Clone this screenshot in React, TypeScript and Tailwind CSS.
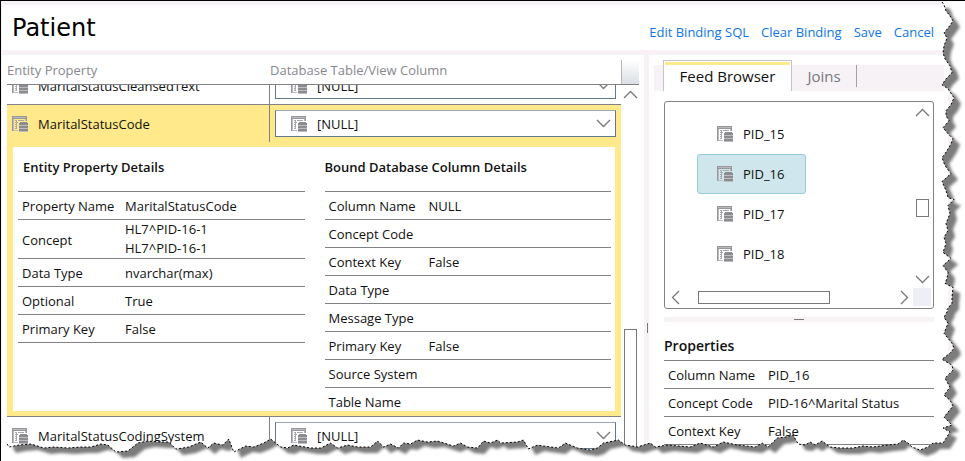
import React from "react";

type Row = { label: string; value?: string[] };

const entityRows: Row[] = [
  { label: "Property Name", value: ["MaritalStatusCode"] },
  { label: "Concept", value: ["HL7^PID-16-1", "HL7^PID-16-1"] },
  { label: "Data Type", value: ["nvarchar(max)"] },
  { label: "Optional", value: ["True"] },
  { label: "Primary Key", value: ["False"] },
];

const columnRows: Row[] = [
  { label: "Column Name", value: ["NULL"] },
  { label: "Concept Code" },
  { label: "Context Key", value: ["False"] },
  { label: "Data Type" },
  { label: "Message Type" },
  { label: "Primary Key", value: ["False"] },
  { label: "Source System" },
  { label: "Table Name" },
];

const feedRows: Row[] = [
  { label: "Column Name", value: ["PID_16"] },
  { label: "Concept Code", value: ["PID-16^Marital Status"] },
  { label: "Context Key", value: ["False"] },
];

function TableIcon() {
  return (
    <svg width="16" height="16" viewBox="0 0 16 16" className="shrink-0" shapeRendering="crispEdges" aria-hidden="true">
      <path fill="#96969b" d="M0 0h15v1H0zM0 1h1v14H0zM14 1h1v4h-1zM1 2h13v1H1z" />
      <path fill="#b9b9be" d="M1 1h13v1H1zM1 3h1v12H1zM13 3h1v2h-1zM2 14h4v1H2z" />
      <path fill="#a8a8ad" d="M3 4h2v1H3zM6 4h6v1H6zM3 6h1v1H3zM5 6h1v1H5zM3 8h2v1H3zM3 10h2v1H3zM3 12h2v1H3zM4 4h1v9H4z" />
      <path fill="#8b8b90" d="M8 6h7v1H8zM7 7h9v2H7zM7 10h9v2H7zM7 13h9v2H7z" />
      <path fill="#bcbcc1" d="M7 9h9v1H7zM7 12h9v1H7zM7 15h9v1H7z" />
    </svg>
  );
}

const chevrons = {
  up: "M0 7 6.500 0.500 13 7",
  down: "M0 0 6.500 6.500 13 0",
  left: "M7 0 0.500 6.500 7 13",
  right: "M0 0 6.500 6.500 0 13",
};

function Chevron({ dir }: { dir: keyof typeof chevrons }) {
  const flat = dir === "up" || dir === "down";
  return (
    <svg width={flat ? 13 : 7} height={flat ? 7 : 13} className="block shrink-0 overflow-visible" aria-hidden="true">
      <path d={chevrons[dir]} fill="none" stroke="#77777c" strokeWidth="1.3" />
    </svg>
  );
}

function Details({ rows, labelWidth, openEnd }: { rows: Row[]; labelWidth: string; openEnd?: boolean }) {
  return (
    <table className="w-full border-collapse text-left">
      <tbody>
        {rows.map((r, i) => (
          <tr
            key={r.label}
            className={openEnd && i === rows.length - 1 ? "h-7 border-t border-[#828286]" : "h-7 border-y border-[#828286]"}
          >
            <th scope="row" className={`${labelWidth} pl-1 pt-[2px] font-normal`}>{r.label}</th>
            <td className={r.value && r.value.length > 1 ? "" : "pt-[2px]"}>
              {r.value?.map((v, n) => (
                <div key={n} className="leading-[19px]">{v}</div>
              ))}
            </td>
          </tr>
        ))}
      </tbody>
    </table>
  );
}

function PropertyRow({ name }: { name: string }) {
  return (
    <div className="flex h-[37px] shrink-0">
      <div className="flex w-[262px] items-center gap-[10px] pl-[5px]">
        <TableIcon />
        <span className="truncate pt-[2px]">{name}</span>
      </div>
      <div className="flex flex-1 items-center border-l border-[#828286] pl-[5px] pr-[5px]">
        <label className="relative flex h-[27px] w-full items-center">
          <span className="pointer-events-none absolute left-4"><TableIcon /></span>
          <select
            aria-label={`${name} column`}
            className="h-full w-full appearance-none border border-[#64788c] border-t-[#9aa6b2] bg-white pl-[41px] pt-[2px] outline-none"
          >
            <option>[NULL]</option>
          </select>
          <span className="pointer-events-none absolute right-[6px]"><Chevron dir="down" /></span>
        </label>
      </div>
    </div>
  );
}

function TreeItem({ name, selected }: { name: string; selected?: boolean }) {
  return (
    <button
      className={
        selected
          ? "flex h-10 w-[109px] items-center gap-[10px] rounded-[3px] border border-[#93cdd8] bg-[#cfe6ed] pl-[19px]"
          : "flex h-10 w-[109px] items-center gap-[10px] border border-transparent pl-[19px]"
      }
    >
      <TableIcon />
      {name}
    </button>
  );
}

const edge =
  "942,1 944,4 946,10 950,15 953,20 948,27 944,32 947,37 944,45 943,52 945,58 950,65 952,72 946,78 942,84 948,88 954,97 951,104 946,110 946,115 949,120 943,127 948,133 953,138 950,145 945,153 942,157 945,165 951,173 942,181 946,190 948,197 954,199 948,205 950,213 946,223 948,230 944,237 946,243 943,252 951,258 943,265 948,272 947,278 945,283 953,287 952,297 952,303 947,309 948,310 944,317 948,323 944,333 952,343 954,348 950,353 942,359 952,365 953,370 945,378 950,387 944,395 950,400 953,406 944,417 952,425 943,428 950,432 943,443 " +
  "933,443 928,447 920,450 912,447 908,443 903,440 898,444 887,445 873,447 863,446 853,448 840,448 830,447 822,441 815,445 810,442 805,445 798,444 793,435 785,437 777,438 768,447 762,443 755,447 737,445 723,442 713,447 700,443 690,447 667,445 655,447 650,443 637,447 632,446 625,445 618,440 603,443 597,448 590,450 577,448 565,443 558,448 543,446 537,445 528,449 523,440 517,442 500,443 497,440 490,443 483,441 477,448 467,447 460,443 453,446 437,441 427,442 417,440 410,444 403,443 398,448 390,444 383,447 377,441 370,447 357,447 347,445 337,448 330,443 320,448 310,448 293,445 287,448 280,447 270,439 263,443 253,447 245,446 233,452 228,439 222,445 213,443 207,448 200,442 188,447 182,448 175,449 168,442 160,442 147,441 137,443 127,451 115,452 107,445 100,444 90,447 80,447 67,448 53,447 43,448 30,444 18,445 8,447 5,442";

function TornEdge() {
  return (
    <svg
      className="pointer-events-none absolute inset-0 h-full w-full"
      viewBox="0 0 965 461"
      preserveAspectRatio="none"
      aria-hidden="true"
    >
      <defs>
        <clipPath id="outside">
          <polygon points={`965,0 ${edge} 0,443 0,461 965,461`} />
        </clipPath>
        <filter id="soft" x="-5%" y="-5%" width="110%" height="110%">
          <feGaussianBlur stdDeviation="1.8" />
        </filter>
      </defs>
      <g clipPath="url(#outside)">
        <rect x="-2" y="-2" width="969" height="465" fill="#fff" />
        <polygon points={`0,0 ${edge} 5,430`} transform="translate(7 6)" fill="#7c7c7c" filter="url(#soft)" />
      </g>
      <polyline points={edge} fill="none" stroke="#000" strokeWidth="1" strokeDasharray="2 2" />
    </svg>
  );
}

export default function App() {
  return (
    <div className="relative flex h-screen flex-col overflow-hidden border-l border-t border-black bg-[#f7f2f6] pl-px pt-1 font-['Open_Sans','Noto_Sans',sans-serif] text-[13px] leading-[19px] text-[#111]">
      <header className="flex h-[45px] shrink-0 items-center justify-between bg-white pl-[10px] pr-[31px]">
        <h1 className="font-['DejaVu_Sans',sans-serif] text-2xl text-black">Patient</h1>
        <nav className="flex gap-3 pt-[10px] text-[#0f76e6]">
          <a href="#sql">Edit Binding SQL</a>
          <a href="#clear">Clear Binding</a>
          <a href="#save">Save</a>
          <a href="#cancel">Cancel</a>
        </nav>
      </header>

      <div className="mt-[5px] flex min-h-0 flex-1">
        <main className="flex min-w-0 flex-1 flex-col bg-white pl-[5px] pr-[5px]">
          <div className="flex h-[30px] shrink-0 items-end border-b border-[#828286] text-[#88888e]">
            <div className="w-[263px] pb-1">Entity Property</div>
            <div className="flex-1 pb-1">Database Table/View Column</div>
            <div className="h-6 w-[18px] border-l border-[#b4b4ba] bg-linear-to-b from-white to-[#dbe0e4]" />
          </div>
          <div className="flex min-h-0 flex-1">
            <div className="flex min-w-0 flex-1 flex-col overflow-hidden">
              <div className="flex h-5 shrink-0 flex-col justify-end overflow-hidden border-b border-[#828286]">
                <PropertyRow name="MaritalStatusCleansedText" />
              </div>
              <section className="shrink-0 border-b border-[#828286] bg-[#ffe98a]">
                <PropertyRow name="MaritalStatusCode" />
                <div className="px-[6px] pb-[5px] pt-[5px]">
                  <div className="flex h-[264px] gap-5 overflow-hidden bg-white pl-[5px] pr-1">
                    <div className="flex-1">
                      <h2 className="h-11 pl-[5px] pt-[11px] font-semibold">Entity Property Details</h2>
                      <Details rows={entityRows} labelWidth="w-[107px]" />
                    </div>
                    <div className="flex-1">
                      <h2 className="h-11 pt-[11px] font-semibold">Bound Database Column Details</h2>
                      <Details rows={columnRows} labelWidth="w-[104px]" openEnd />
                    </div>
                  </div>
                </div>
              </section>
              <PropertyRow name="MaritalStatusCodingSystem" />
            </div>
            <div className="flex w-[18px] flex-col items-center pt-[6px]">
              <Chevron dir="up" />
              <div className="mt-[231px] w-[13px] flex-1 border border-b-0 border-[#77777c]" />
            </div>
          </div>
        </main>

        <div className="flex w-[5px] shrink-0 justify-end pr-px pt-[268px]">
          <div className="h-[10px] w-px bg-[#77777c]" />
        </div>

        <aside className="mr-[17px] flex w-[299px] shrink-0 flex-col bg-white pl-[5px] pr-1">
          <div role="tablist" className="mt-[5px] flex h-[31px] shrink-0 items-end bg-linear-to-b from-white from-[5px] to-[#f7f2f6] to-[5px] pl-[9px] text-[15px]">
            <button role="tab" aria-selected="true" className="h-[31px] w-[129px] border border-b-0 border-[#c6c6ca] bg-white p-px text-[#111]">
              <span className="block h-full border-t-[3px] border-[#ffe98a] pt-[2px]">Feed Browser</span>
            </button>
            <button role="tab" aria-selected="false" className="mb-1 h-[22px] w-[65px] border-r border-[#a0a0a4] text-[#77777c]">Joins</button>
          </div>

          <div className="ml-[10px] mr-[10px] mt-[10px] flex h-[208px] shrink-0 flex-col rounded-[3px] border border-[#828286] pb-[2px] pl-px pr-[2px] pt-px">
            <div className="flex flex-1">
              <div className="flex flex-1 flex-col pl-[31px] pt-[11px]">
                <TreeItem name="PID_15" />
                <TreeItem name="PID_16" selected />
                <TreeItem name="PID_17" />
                <TreeItem name="PID_18" />
              </div>
              <div className="flex w-[18px] flex-col items-center pb-[5px] pt-[6px]">
                <Chevron dir="up" />
                <div className="mt-[83px] h-[18px] w-[13px] border border-[#77777c]" />
                <div className="flex-1" />
                <Chevron dir="down" />
              </div>
            </div>
            <div className="flex h-[18px] items-center">
              <div className="flex flex-1 items-center pl-[6px] pr-[5px]">
                <Chevron dir="left" />
                <div className="ml-[19px] h-[13px] w-[132px] border border-[#77777c]" />
                <div className="flex-1" />
                <Chevron dir="right" />
              </div>
              <div className="h-[18px] w-[18px] bg-[#eeeef8]" />
            </div>
          </div>

          <div className="ml-[10px] mr-[10px] mt-2 flex h-[5px] shrink-0 items-center justify-center bg-[#f7f2f6]">
            <div className="h-px w-[10px] bg-[#77777c]" />
          </div>

          <div className="ml-[10px] mr-[10px] pt-[14px]">
            <h2 className="h-6 text-sm font-semibold">Properties</h2>
            <Details rows={feedRows} labelWidth="w-[104px]" />
          </div>
        </aside>
      </div>

      <TornEdge />
    </div>
  );
}
